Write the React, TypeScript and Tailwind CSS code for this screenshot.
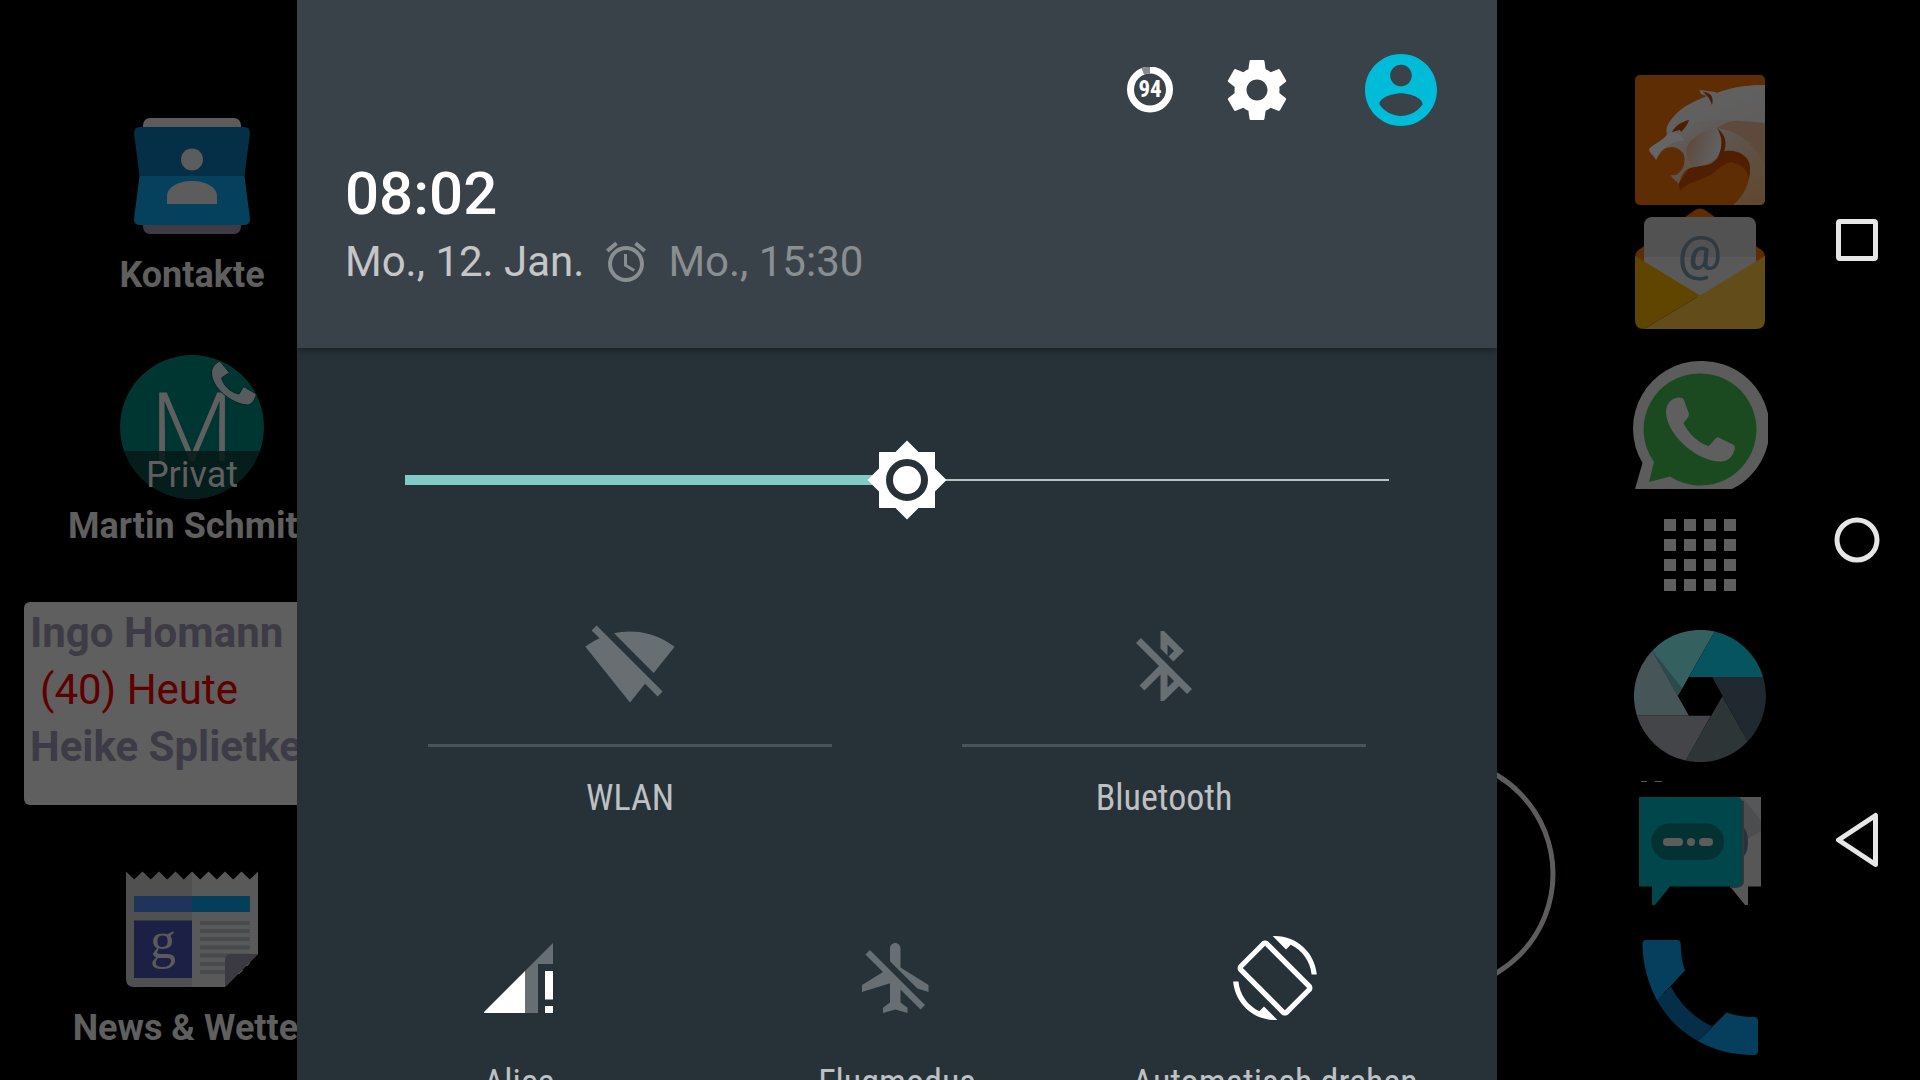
import { useState } from 'react'
import type { ReactNode } from 'react'

const ContactsIcon = () => (
  <svg className="size-36" viewBox="0 0 144 144">
    <rect x="23" y="14" width="98" height="60" rx="7" fill="#5c5c5c" />
    <rect x="23" y="70" width="98" height="60" rx="7" fill="#3e3b45" />
    <path d="M20 23H124Q130 23 130 29L124.500 72H19.500L14 29Q14 23 20 23z" fill="#052f47" />
    <path d="M19.500 72H124.500L130 115Q130 121 124 121H20Q14 121 14 115z" fill="#05405d" />
    <circle cx="72" cy="55.500" r="11" fill="#5c5c5c" />
    <path d="M47 100V92C47 83 59 77 72 77S97 83 97 92V100z" fill="#5c5c5c" />
  </svg>
)

const AvatarIcon = () => (
  <svg className="size-36" viewBox="0 0 144 144">
    <defs>
      <clipPath id="avatar">
        <circle cx="72" cy="72" r="72" />
      </clipPath>
    </defs>
    <circle cx="72" cy="72" r="72" fill="#003632" />
    <text x="72" y="106" fontSize="96" textAnchor="middle" className="fill-[#5f5f5f] font-light">
      M
    </text>
    <rect y="96" width="144" height="48" fill="#061918" fillOpacity="0.85" clipPath="url(#avatar)" />
    <text x="72" y="132" fontSize="36" textAnchor="middle" className="fill-[#5f5f5f]">
      Privat
    </text>
    <path
      d="M100 6.300L109.500 17.700L101.500 23C104 31 110 37 119 39L123.500 31.500L136.300 39C135 46 131 50 127 50C112 49 91 33 91.500 17C92 11 97 7 100 6.300z"
      fill="#565b5d"
      stroke="#002623"
    />
  </svg>
)

const newsLines = [64, 72, 80, 88.5, 96.5, 105, 113]

const NewsIcon = () => (
  <svg className="size-36" viewBox="0 0 144 144">
    <path
      d="M6 14.500l8.250 8 8.250-8 8.250 8 8.250-8 8.250 8 8.250-8 8.250 8 8.250-8V130H14Q6 130 6 122z"
      fill="#505050"
    />
    <path
      d="M72 14.500l8.250 8 8.250-8 8.250 8 8.250-8 8.250 8 8.250-8 8.250 8 8.250-8V97L105 130H72z"
      fill="#595959"
    />
    <rect x="14" y="39" width="58" height="16" fill="#1f345b" />
    <rect x="72" y="39" width="58" height="16" fill="#053e5a" />
    <rect x="14" y="63.500" width="58" height="57.500" fill="#1c2045" />
    <text x="43" y="101" fontSize="52" textAnchor="middle" className="fill-[#5a5a5a] font-['Liberation_Serif',serif]">
      g
    </text>
    {newsLines.map((y) => (
      <rect key={y} x="80" y={y} width="50" height="4" fill="#464b4e" />
    ))}
    <path d="M105 130V103Q105 97 111 97H138z" fill="#3b3a43" />
    <path d="M139 97.500V131H105.500z" fill="#000" />
  </svg>
)

const CheetahIcon = () => (
  <svg className="h-[130px] w-[130px]" viewBox="0 0 130 130">
    <defs>
      <linearGradient id="fur" x1="0.5" y1="0.2" x2="0.9" y2="1">
        <stop offset="0" stopColor="#606060" />
        <stop offset="0.45" stopColor="#5f5248" />
        <stop offset="1" stopColor="#60482f" />
      </linearGradient>
      <linearGradient id="cheek" x1="0" y1="0" x2="1" y2="0.3">
        <stop offset="0" stopColor="#5c4636" />
        <stop offset="1" stopColor="#626262" />
      </linearGradient>
      <clipPath id="tile">
        <rect width="130" height="130" rx="5" />
      </clipPath>
    </defs>
    <g clipPath="url(#tile)">
      <rect width="130" height="130" fill="#5f2d04" />
      <path
        d="M43.700 109L45 116C54 106 66 106 77 99C86 92 92 86 99 88C108 90 113 96 114 104L118 88L95 70L60 84z"
        fill="#501f02"
      />
      <path
        d="M130 10.300C112 10 98 12 82 18L80 17L64.300 15L66 19L72 21C60 26 50 30 42 38C34 46 30 52 32 59C30 65 20 68 14 74C14 78 19 81 21 85C24 76 30 72 37 72C45 73 50 78 49.500 84C50 92 46 97 41 100L35.700 100.300C38 105 42 106 43.700 109C46 103 48 96 53 94C62 90 70 92 77 88C84 83 86 77 90 76C104 74 115 82 115 92C116 108 108 122 98 130H130z"
        fill="url(#fur)"
      />
      <path d="M60 92C50 84 48 72 58 64C68 56 76 54 83 53C90 62 88 76 80 84C74 89 68 90 60 92z" fill="url(#cheek)" />
      <path d="M82 53C104 56 122 70 130 92V48C112 42 96 44 82 53z" fill="#5e4a3d" />
      <path d="M130 10.300C112 10 98 12 82 18C62 26 42 40 35 58C60 42 90 44 130 48z" fill="#606060" fillOpacity="0.8" />
      <path d="M14 74C20 68 28 66 34 58C42 56 47 60 49 66C40 65 28 70 21 85C20 80 15 78 14 74z" fill="#656565" />
      <path d="M54 45C46 47 40 51 37 57L45 55L46 57C50 53 53 49 54 45z" fill="#4d1e02" />
      <path d="M68 17C77 17 79 24 77 30C75 24 73 21 68 17z" fill="#4d1e02" />
      <path d="M82 53C91 60 92 68 89 77C87 82 85 84 81 86C86 77 87 70 86 63C85 59 84 56 82 53z" fill="#4d1e02" />
    </g>
  </svg>
)

const EmailIcon = () => (
  <svg className="h-[121px] w-[130px]" viewBox="0 0 130 121">
    <path d="M0 50Q0 44 5 41L60 2Q65-1 70 2L125 41Q130 44 130 50L65 90z" fill="#5f2d04" />
    <rect x="9" y="9" width="112" height="80" rx="8" fill="#525252" />
    <path d="M9 49H121V60L65 90L9 60z" fill="#595959" />
    <path d="M0 48L65 87.500L9 121Q0 121 0 112z" fill="#5f4500" />
    <path d="M130 48V112Q130 121 121 121H9L65 87.500z" fill="#624c1a" />
    <text x="65" y="62" fontSize="49" textAnchor="middle" className="fill-[#303a42] font-medium">
      @
    </text>
  </svg>
)

const WhatsAppIcon = () => (
  <svg className="h-[128px] w-[135px]" viewBox="0 0 135 128">
    <path d="M67.500 0A67.500 67.500 0 0 1 99 128H2L9.500 102A67.500 67.500 0 0 1 67.500 0z" fill="#5c5c5c" />
    <path d="M67.500 12.500A56 56 0 1 1 37 115.500L16 121L21 101A56 56 0 0 1 67.500 12.500z" fill="#1b4a20" />
    <path
      d="M43 37C48 36 50 37 51 39L56 53C56 56 53 59 50.500 62C55 72 64 81 75 85C78 84 81 78 84.500 76L101 84C103 87 101 90 100 93C96 100 90 101 85 100.500C60 98 34 72 33 52C33 43 38 38 43 37z"
      fill="#5f5f5f"
    />
  </svg>
)

const CameraIcon = () => (
  <svg className="h-[132px] w-[132px]" viewBox="0 0 132 132">
    <path d="M18.300 20.700A66 66 0 0 1 80.700 1.500L44 66z" fill="#346160" />
    <path d="M80.700 1.500A66 66 0 0 1 129.200 47H55z" fill="#065460" />
    <path d="M129.200 47A66 66 0 0 1 113.700 111.400L78 47z" fill="#202930" />
    <path d="M113.700 111.400A66 66 0 0 1 51.700 130.600L88.300 66z" fill="#2e3537" />
    <path d="M51.700 130.600A66 66 0 0 1 2.800 85.500H77z" fill="#434548" />
    <path d="M2.800 85.500A66 66 0 0 1 18.300 20.700L55 85.500z" fill="#465557" />
    <path d="M18.300 20.700L48 58L44 66z" fill="#2c4a4b" />
    <path d="M55 47H78L88.300 66L77 85.500H55L44 66z" fill="#000" />
  </svg>
)

const MessengerIcon = () => (
  <svg className="h-[124px] w-[122px]" viewBox="0 0 122 124">
    <path d="M2 0H8V1H2zM16 0H23V1H16z" fill="#555" />
    <path d="M98 16H122V105.500H109V124H106L91 105.500H98z" fill="#575757" />
    <path d="M103 16L122 40V50L103 61z" fill="#4b4d4f" />
    <ellipse cx="103" cy="61" rx="6" ry="14.500" fill="#27323a" />
    <path d="M103 20H105V101Q105 105.500 98 107H91V105H98z" fill="#35363c" />
    <path d="M0 16H98Q103 16 103 21V100.500Q103 105.500 98 105.500H31L16 124H13V105.500H0z" fill="#00464b" />
    <rect x="12.500" y="42.500" width="72.500" height="36.500" rx="18" fill="#043233" />
    <rect x="24" y="57" width="20" height="8" rx="4" fill="#5c5c5c" />
    <circle cx="52" cy="61" r="4" fill="#5c5c5c" />
    <rect x="60" y="57" width="14" height="8" rx="4" fill="#5c5c5c" />
  </svg>
)

const PhoneIcon = () => (
  <svg className="h-[115px] w-[116px]" viewBox="0 0 116 115">
    <path d="M29 46.500C38 64 51 77 70 86.500L56 101C38 91 24 77 15 60z" fill="#052f48" />
    <path d="M4 0H35Q38.700 0 38.700 4C38.700 14 40 22 43 30.500L15 60.500C6 43 .500 24 .500 4Q.500 0 4 0z" fill="#053f5d" />
    <path d="M84.500 72.500C94 76 103 77 112 77Q116 77 116 81V111Q116 115 112 115C91 115 72 110 56 101z" fill="#053f5d" />
  </svg>
)

interface HomeItemProps {
  icon: ReactNode
  label: string
}

const HomeItem = ({ icon, label }: HomeItemProps) => (
  <a href="#" className="flex flex-col items-center gap-[3px]">
    {icon}
    <span className="whitespace-nowrap text-[36px] leading-[48px] font-bold text-[#5f5f5f]">{label}</span>
  </a>
)

const icons = {
  wlan: 'M23.64 7c-.45-.34-4.93-4-11.64-4-1.5 0-2.89.19-4.15.48L18.18 13.8 23.64 7zm-6.6 8.22L3.27 1.44 2 2.72l2.05 2.06C1.91 5.76.59 6.82.36 7l11.63 14.49.01.01.01-.01 3.9-4.86 3.32 3.32 1.27-1.27-3.46-3.46z',
  bluetooth:
    'M13 5.83l1.88 1.88-1.6 1.6 1.41 1.41 3.02-3.02L12 2h-1v5.03l2 2v-3.2zM5.41 4L4 5.41 10.59 12 5 17.59 6.41 19 11 14.41V22h1l4.29-4.29 2.3 2.29L20 18.59 5.41 4zM13 18.17v-3.76l1.88 1.88L13 18.17z',
  airplane:
    'M13 9V3.5c0-.83-.67-1.5-1.5-1.5S10 2.67 10 3.5v3.68l7.83 7.83L21 16v-2l-8-5zM3 5.27l4.99 4.99L2 14v2l8-2.5V19l-2 1.5V22l3.5-1 3.5 1v-1.5L13 19v-3.73L18.73 21 20 19.73 4.27 4 3 5.27z',
  rotation:
    'M16.48 2.52c3.27 1.55 5.61 4.72 5.97 8.48h1.5C23.44 4.84 18.29 0 12 0l-.66.03 3.81 3.81 1.33-1.32zm-6.25-.77c-.59-.59-1.54-.59-2.12 0L1.75 8.11c-.59.59-.59 1.54 0 2.12l12.02 12.02c.59.59 1.54.59 2.12 0l6.36-6.36c.59-.59.59-1.54 0-2.12L10.23 1.75zm4.6 19.44L2.81 9.17l6.36-6.36 12.02 12.02-6.36 6.36zm-7.31.29C4.25 19.94 1.91 16.76 1.55 13H.05C.56 19.16 5.71 24 12 24l.66-.03-3.81-3.81-1.33 1.32z',
  alarm:
    'M22 5.72l-4.6-3.86-1.29 1.53 4.6 3.86L22 5.72zM7.88 3.39L6.6 1.86 2 5.71l1.29 1.53 4.59-3.85zM12.5 8H11v6l4.75 2.85.75-1.23-4-2.37V8zM12 4c-4.97 0-9 4.03-9 9s4.02 9 9 9c4.97 0 9-4.03 9-9s-4.03-9-9-9zm0 16c-3.87 0-7-3.13-7-7s3.13-7 7-7 7 3.13 7 7-3.13 7-7 7z',
  settings:
    'M19.43 12.98c.04-.32.07-.64.07-.98s-.03-.66-.07-.98l2.11-1.65c.19-.15.24-.42.12-.64l-2-3.46c-.12-.22-.39-.3-.61-.22l-2.49 1c-.52-.4-1.08-.73-1.69-.98l-.38-2.65C14.46 2.18 14.25 2 14 2h-4c-.25 0-.46.18-.49.42l-.38 2.65c-.61.25-1.17.59-1.69.98l-2.49-1c-.23-.09-.49 0-.61.22l-2 3.46c-.13.22-.07.49.12.64l2.11 1.65c-.04.32-.07.65-.07.98s.03.66.07.98l-2.11 1.65c-.19.15-.24.42-.12.64l2 3.46c.12.22.39.3.61.22l2.49-1c.52.4 1.08.73 1.69.98l.38 2.65c.03.24.24.42.49.42h4c.25 0 .46-.18.49-.42l.38-2.65c.61-.25 1.17-.59 1.69-.98l2.49 1c.23.09.49 0 .61-.22l2-3.46c.12-.22.07-.49-.12-.64l-2.11-1.65zM12 15.5c-1.93 0-3.5-1.57-3.5-3.5s1.57-3.5 3.5-3.5 3.5 1.57 3.5 3.5-1.57 3.5-3.5 3.5z',
  account:
    'M12 2C6.48 2 2 6.48 2 12s4.48 10 10 10 10-4.480 10-10S17.520 2 12 2zm0 3c1.660 0 3 1.340 3 3s-1.340 3-3 3-3-1.340-3-3 1.340-3 3-3zm0 14.200c-2.500 0-4.710-1.280-6-3.220.030-1.990 4-3.080 6-3.080 1.990 0 5.970 1.090 6 3.080-1.290 1.940-3.500 3.220-6 3.220z',
}

interface TileProps {
  icon: ReactNode
  label: string
  large?: boolean
}

const Tile = ({ icon, label, large }: TileProps) => (
  <button className={large ? 'flex flex-1 flex-col items-center px-[65px]' : 'flex flex-1 flex-col items-center'}>
    <span className="flex h-[84px] items-center">{icon}</span>
    {large && <span className="mt-9 h-[3px] w-full bg-[#47545a]" />}
    <span
      className={
        large
          ? "mt-[27px] text-[36px] leading-[48px] text-[#bec1c3] font-['Roboto_Condensed',Roboto,sans-serif]"
          : "mt-[39px] text-[36px] leading-[48px] whitespace-nowrap text-[#bec1c3] font-['Roboto_Condensed',Roboto,sans-serif]"
      }
    >
      {label}
    </span>
  </button>
)

const BrightnessSlider = () => {
  const [value, setValue] = useState(51)

  return (
    <div className="relative mx-[108px] mt-[92px] flex h-20 shrink-0 items-center">
      <div className="h-[10px] bg-[#80cbc4]" style={{ width: `${value}%` }} />
      <div className="h-[2px] flex-1 bg-[#bec1c3]" />
      <svg className="absolute size-20 -translate-x-1/2" style={{ left: `${value}%` }} viewBox="0 0 80 80">
        <path d="M12 12H68V68H12zM40 .5L79.500 40L40 79.500L.5 40z" fill="#fff" />
        <circle cx="40" cy="40" r="17.500" fill="none" stroke="#263238" strokeWidth="7" />
      </svg>
      <input
        type="range"
        aria-label="Helligkeit"
        className="absolute inset-0 w-full cursor-pointer opacity-0"
        value={value}
        onChange={(e) => setValue(Number(e.target.value))}
      />
    </div>
  )
}

const QuickSettings = () => (
  <section className="flex min-w-0 flex-col overflow-hidden bg-[#263238]">
    <header className="relative shrink-0 bg-[#3a4249] px-12 pt-[54px] pb-[62px] shadow-[0_2px_8px_rgba(0,0,0,0.4)]">
      <div className="flex items-center justify-end pr-3">
        <svg className="size-[46px]" viewBox="0 0 46 46">
          <circle cx="23" cy="22.500" r="19.500" fill="none" stroke="#fff" strokeWidth="7" />
          <path d="M15.800 4.400A19.500 19.500 0 0 1 23 3" fill="none" stroke="#878b8e" strokeWidth="7" />
          <text
            x="23"
            y="30"
            fontSize="23"
            textAnchor="middle"
            className="fill-white font-bold font-['Roboto_Condensed',Roboto,sans-serif]"
          >
            94
          </text>
        </svg>
        <button aria-label="Einstellungen" className="ml-12">
          <svg className="size-[72px] fill-white" viewBox="0 0 24 24">
            <path d={icons.settings} />
          </svg>
        </button>
        <button aria-label="Nutzer" className="ml-[72px]">
          <svg className="size-[72px] fill-[#00bcd8]" viewBox="2 2 20 20">
            <path d={icons.account} />
          </svg>
        </button>
      </div>
      <time className="mt-8 block text-[60px] leading-[72px] font-medium text-white">08:02</time>
      <div className="mt-2 flex items-center text-[42px] leading-[48px] whitespace-nowrap">
        <span className="text-[#c4c6c8]">Mo., 12. Jan.</span>
        <svg className="ml-[18px] size-12 fill-[#898e91]" viewBox="0 0 24 24">
          <path d={icons.alarm} />
        </svg>
        <span className="ml-[18px] text-[#898e91]">Mo., 15:30</span>
      </div>
    </header>

    <BrightnessSlider />

    <div className="mt-[104px] flex shrink-0 px-[66px]">
      <Tile
        large
        label="WLAN"
        icon={
          <svg className="size-[92px] fill-[#686f72]" viewBox="0 0 24 24">
            <path d={icons.wlan} />
          </svg>
        }
      />
      <Tile
        large
        label="Bluetooth"
        icon={
          <svg className="size-[84px] fill-[#686f72]" viewBox="0 0 24 24">
            <path d={icons.bluetooth} />
          </svg>
        }
      />
    </div>

    <div className="mt-[114px] grid shrink-0 grid-cols-3 px-[33px]">
      <Tile
        label="Alice"
        icon={
          <svg className="size-[70px]" viewBox="0 0 70 70">
            <path d="M41 28L69 0V21H54V70H41z" fill="#686f72" />
            <path d="M-1 70L41 28V70zM61 28H69V56.500H61zM61 63H69V70H61z" fill="#fff" />
          </svg>
        }
      />
      <Tile
        label="Flugmodus"
        icon={
          <svg className="size-[84px] fill-[#686f72]" viewBox="0 0 24 24">
            <path d={icons.airplane} />
          </svg>
        }
      />
      <Tile
        label="Automatisch drehen"
        icon={
          <svg className="size-[84px] fill-white" viewBox="0 0 24 24">
            <path d={icons.rotation} />
          </svg>
        }
      />
    </div>
  </section>
)

const App = () => {
  return (
    <main className="grid h-screen grid-cols-[297fr_1200fr_109fr_188fr_126fr] grid-rows-1 overflow-hidden bg-black font-[Roboto,sans-serif]">
      <section className="min-w-0 overflow-hidden">
        <div className="grid h-full w-96 grid-rows-4 items-center pt-[76px]">
          <HomeItem icon={<ContactsIcon />} label="Kontakte" />
          <HomeItem icon={<AvatarIcon />} label="Martin Schmitz" />
          <div className="ml-6 h-[203px] rounded-md bg-[#5f5f5f] py-0.5 pl-1.5 text-[42px] leading-[57px] whitespace-nowrap">
            <p className="font-bold text-[#3d3b45]">Ingo Homann</p>
            <p className="pl-2.5 text-[#5f0000]">(40) Heute</p>
            <p className="font-bold text-[#3d3b45]">Heike Splietker</p>
          </div>
          <HomeItem icon={<NewsIcon />} label="News &amp; Wetter" />
        </div>
      </section>

      <QuickSettings />

      <div className="flex items-end overflow-hidden pb-[103px]">
        <svg className="h-[206px] w-[60px]" viewBox="0 0 60 206">
          <circle cx="-59" cy="103" r="115" fill="none" stroke="#5f5c5e" strokeWidth="5" />
        </svg>
      </div>

      <section className="flex flex-col items-center pt-[75px]">
        <a href="#" aria-label="CM Browser">
          <CheetahIcon />
        </a>
        <a href="#" aria-label="E-Mail" className="mt-[3px]">
          <EmailIcon />
        </a>
        <a href="#" aria-label="WhatsApp" className="mt-8">
          <WhatsAppIcon />
        </a>
        <button aria-label="Apps" className="mt-[30px] grid grid-cols-4 gap-2">
          {Array.from({ length: 16 }, (_, i) => (
            <span key={i} className="size-3 bg-[#5f5f5f]" />
          ))}
        </button>
        <a href="#" aria-label="Kamera" className="mt-[39px]">
          <CameraIcon />
        </a>
        <a href="#" aria-label="Messenger" className="mt-[19px]">
          <MessengerIcon />
        </a>
        <a href="#" aria-label="Telefon" className="mt-[35px]">
          <PhoneIcon />
        </a>
      </section>

      <nav className="flex flex-col items-center justify-around py-[90px]">
        <button aria-label="Übersicht" className="flex flex-1 items-center">
          <svg className="size-14" viewBox="0 0 56 56" fill="none" stroke="#e6e6e6" strokeWidth="5">
            <rect x="9.500" y="9.500" width="37" height="37" rx="1.500" />
          </svg>
        </button>
        <button aria-label="Startseite" className="flex flex-1 items-center">
          <svg className="size-14" viewBox="0 0 56 56" fill="none" stroke="#e6e6e6" strokeWidth="5">
            <circle cx="28" cy="28" r="20" />
          </svg>
        </button>
        <button aria-label="Zurück" className="flex flex-1 items-center">
          <svg className="size-14" viewBox="0 0 56 56" fill="none" stroke="#e6e6e6" strokeWidth="5" strokeLinejoin="round">
            <path d="M9.500 28L46.500 3.500V52.500z" />
          </svg>
        </button>
      </nav>
    </main>
  )
}

export default App
